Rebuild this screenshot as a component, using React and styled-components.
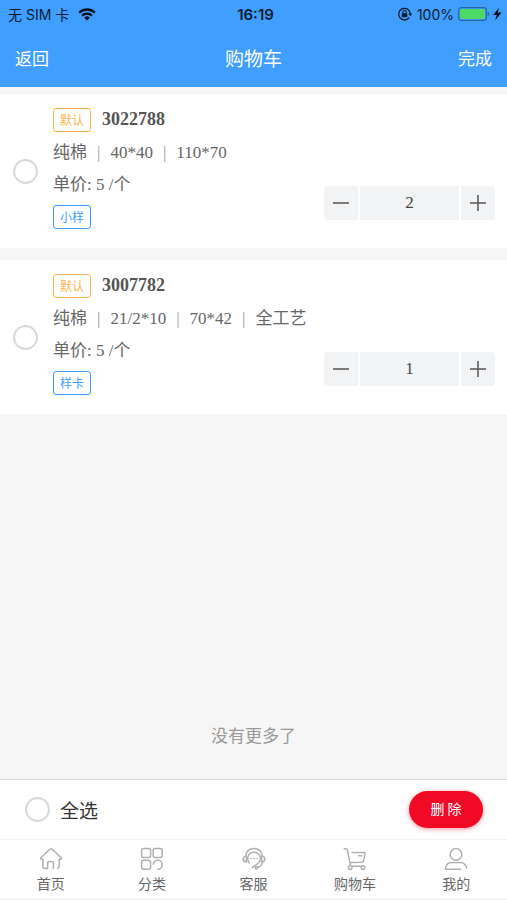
import React, { useState } from "react"
import styled, { createGlobalStyle, ThemeProvider } from "styled-components"

const theme = {
  colors: {
    primary: "#409eff",
    warning: "#fdb44f",
    danger: "#f00a26",
    page: "#f6f6f6",
    text: "#666",
    muted: "#999",
  },
  fonts: {
    serif: `"Liberation Serif", "Noto Sans CJK SC", serif`,
    sans: `"Noto Sans CJK SC", sans-serif`,
    system: `Inter, "Noto Sans CJK SC", sans-serif`,
  },
}

//Styles
const GlobalStyle = createGlobalStyle`
  * {
    box-sizing: border-box;
  }
  body {
    margin: 0;
    background: ${props => props.theme.colors.page};
    font-family: ${props => props.theme.fonts.sans};
  }
  button,
  input {
    margin: 0;
    padding: 0;
    border: 0;
    font-family: inherit;
  }
`
const Page = styled.div`
  display: flex;
  flex-direction: column;
  min-height: 100vh;
`
const Header = styled.header`
  background: ${props => props.theme.colors.primary};
`
const StatusBar = styled.div`
  display: grid;
  grid-template-columns: 1fr auto 1fr;
  align-items: center;
  height: 28px;
  padding: 0 4px 0 8px;
  color: #0b1c30;
  font-family: ${props => props.theme.fonts.system};
  font-size: 14px;
`
const StatusGroup = styled.div`
  display: flex;
  align-items: center;
  justify-content: ${props => (props.$end ? "flex-end" : "flex-start")};
  gap: ${props => (props.$end ? "4px" : "9px")};
`
const Clock = styled.time`
  font-size: 15px;
  font-weight: 600;
`
const NavBar = styled.div`
  display: grid;
  grid-template-columns: 1fr auto 1fr;
  align-items: center;
  height: 59px;
  padding: 0 15px;
`
const NavButton = styled.button`
  justify-self: ${props => (props.$end ? "end" : "start")};
  background: none;
  color: #fff;
  font-size: 17px;
`
const NavTitle = styled.h1`
  margin: 0;
  color: #fff;
  font-size: 19px;
  font-weight: 400;
`
const List = styled.main`
  display: flex;
  flex: 1;
  flex-direction: column;
  gap: 12px;
  padding-top: 7px;
  background: ${props => props.theme.colors.page};
`
const Card = styled.article`
  display: flex;
  align-items: center;
  height: 154px;
  padding: 0 12px 0 13px;
  background: #fff;
`
const Radio = styled.input`
  flex: none;
  appearance: none;
  width: 25px;
  height: 25px;
  border: 2px solid #d9d9d9;
  border-radius: 50%;
  background: #fff;
  &:checked {
    border-color: ${props => props.theme.colors.primary};
    background: ${props => props.theme.colors.primary};
  }
`
const Details = styled.div`
  flex: 1;
  align-self: flex-start;
  margin-left: 15px;
  padding-top: 14px;
  color: ${props => props.theme.colors.text};
  font-family: ${props => props.theme.fonts.serif};
  font-size: 17px;
`
const TitleRow = styled.div`
  display: flex;
  gap: 11px;
  margin-bottom: 5px;
`
const Code = styled.h2`
  margin: 0;
  color: #555;
  font-size: 18px;
  line-height: 22px;
`
const Badge = styled.span`
  display: inline-block;
  padding: 0 6px;
  border: 1px solid ${props => props.theme.colors[props.$tone]};
  border-radius: 3px;
  color: ${props => props.theme.colors[props.$tone]};
  font-family: ${props => props.theme.fonts.sans};
  font-size: 12px;
  line-height: 22px;
`
const Line = styled.div`
  line-height: 32px;
`
const Spec = styled.span`
  & + &::before {
    content: "|";
    margin: 0 10px;
    color: ${props => props.theme.colors.muted};
  }
`
const TagRow = styled.div`
  display: flex;
  margin-top: 4px;
`
const Stepper = styled.div`
  display: flex;
  flex: none;
  align-self: flex-end;
  gap: 2px;
  margin-bottom: 28px;
`
const StepButton = styled.button`
  display: flex;
  align-items: center;
  justify-content: center;
  width: 34px;
  height: 34px;
  border-radius: ${props => (props.$end ? "0 4px 4px 0" : "4px 0 0 4px")};
  background: #f2f3f5;
  color: #555;
`
const Quantity = styled.input`
  width: 99px;
  height: 34px;
  background: #f2f3f5;
  color: #444;
  font-family: ${props => props.theme.fonts.serif};
  font-size: 17px;
  text-align: center;
`
const EndText = styled.p`
  margin: auto 0 29px;
  color: ${props => props.theme.colors.muted};
  font-size: 17px;
  line-height: 30px;
  text-align: center;
`
const ActionBar = styled.div`
  display: flex;
  align-items: center;
  justify-content: space-between;
  height: 60px;
  padding: 0 24px 0 25px;
  border-top: 1px solid #dcdcdc;
  background: #fff;
`
const SelectAll = styled.label`
  display: flex;
  align-items: center;
  gap: 10px;
  color: #333;
  font-size: 19px;
  line-height: 26px;
`
const DeleteButton = styled.button`
  width: 74px;
  height: 37px;
  padding-bottom: 3px;
  border-radius: 19px;
  background: ${props => props.theme.colors.danger};
  box-shadow: 0 1px 5px rgba(240, 10, 38, 0.45);
  color: #fff;
  font-size: 14px;
`
const TabBar = styled.nav`
  display: flex;
  height: 61px;
  border-top: 1px solid #f3f3f3;
  border-bottom: 1px solid #ececec;
  background: #fff;
`
const Tab = styled.a`
  display: flex;
  flex: 1;
  flex-direction: column;
  align-items: center;
  padding-top: 7px;
  color: ${props => props.theme.colors.text};
  font-size: 14px;
  line-height: 22px;
  text-decoration: none;
`
const TabIcon = styled.svg`
  width: 24px;
  height: 24px;
  margin-bottom: 1px;
  fill: none;
  stroke: #b0b0b0;
  stroke-width: 1.5;
  stroke-linecap: round;
  stroke-linejoin: round;
`

const WifiIcon = () => (
  <svg width="18" height="13" viewBox="0 0 18 13" fill="none" stroke="#06101c">
    <path d="M1.2 4.6a11.4 11.4 0 0 1 15.6 0" strokeWidth="2.3" />
    <path d="M4 7.7a7.2 7.2 0 0 1 10 0" strokeWidth="2.2" />
    <path d="M9 12.6 6.2 9.7a4 4 0 0 1 5.6 0Z" fill="#06101c" stroke="none" />
  </svg>
)

const LockIcon = () => (
  <svg width="16" height="14" viewBox="0 0 16 14" fill="none" stroke="#0b1c30">
    <path d="M12.2 10.6A5.8 5.8 0 1 1 13.3 7" strokeWidth="1.3" />
    <path d="M11.2 6.4h4.2l-2.1 2.8z" fill="#0b1c30" stroke="none" />
    <path d="M5.8 6.6V5.2a1.7 1.7 0 0 1 3.4 0v1.4" strokeWidth="1.1" />
    <rect x="4.7" y="6.2" width="5.6" height="4" rx=".6" fill="#0b1c30" stroke="none" />
  </svg>
)

const BatteryIcon = () => (
  <svg width="45" height="14" viewBox="0 0 45 14">
    <rect x=".7" y=".7" width="27.6" height="12.6" rx="2.5" fill="none" stroke="#2564a8" strokeWidth="1.2" />
    <rect x="2" y="2" width="25" height="10" rx="1" fill="#4cd964" />
    <path d="M29.6 5v4q1.6-.5 1.6-2t-1.6-2z" fill="#2564a8" />
    <path d="M41 .8 35.2 7.9h3.6L37 13.4l6.6-7.8h-3.9z" fill="#06101c" />
  </svg>
)

const tabs = [
  {
    label: "首页",
    icon: (
      <path d="M18.6 21.4c1.1-.4 1.6-1.3 1.6-2.6v-6.6h1.4c.9 0 1.2-.8.6-1.4L13.2 2.3a1.7 1.7 0 0 0-2.4 0L1.8 10.8c-.6.6-.3 1.4.6 1.4H4v7.4a2 2 0 0 0 2 2h2.6V16c0-.9.5-1.4 1.4-1.4h3c.9 0 1.4.5 1.4 1.4v5.6" />
    ),
  },
  {
    label: "分类",
    icon: (
      <>
        <rect x="1.6" y="1.6" width="9" height="9" rx="2" />
        <rect x="13.2" y="1.6" width="9" height="9" rx="2" />
        <rect x="1.6" y="13.2" width="9" height="9" rx="2" />
        <path d="M13.3 17.2a4.5 4.5 0 1 1 4.6 5" />
      </>
    ),
  },
  {
    label: "客服",
    icon: (
      <>
        <path d="M3.6 9.2C4.3 4.6 7.6 1.6 12 1.6s7.7 3 8.4 7.6" />
        <path d="M4.4 9.2c-2 0-3.2 1.2-3.2 2.8s1.2 2.9 3.2 2.9zM19.6 9.2c2 0 3.2 1.2 3.2 2.8s-1.2 2.9-3.2 2.9z" />
        <path d="M7.4 16C3.8 11.6 6.4 5.2 12 5.2s8.2 6 5 10.2c-1.6 2-4.6 2.8-6.6 5.2M20.4 15c-.4 2.9-1.8 4.8-4.6 5.4" />
        <circle cx="14.4" cy="20.8" r="1.2" />
        <path d="M8.8 11.6h.2M12 11.6h.2M15.2 11.6h.2" />
      </>
    ),
  },
  {
    label: "购物车",
    icon: (
      <>
        <path d="M1.2 1.8h1.6c.9 0 1.4.4 1.6 1.3l3 15.1M9 5.4h11.8c.9 0 1.4.5 1.2 1.4l-1.4 7c-.2.9-.8 1.4-1.7 1.5L7.2 15.4M15.6 8.8h3.2" />
        <path d="M8.8 19.2H18.6" />
        <circle cx="7.2" cy="20.6" r="1.8" />
        <circle cx="20" cy="20.6" r="1.8" />
      </>
    ),
  },
  {
    label: "我的",
    icon: (
      <>
        <circle cx="12" cy="7.4" r="5.8" />
        <path d="M16.6 22.2H2.4c-.8 0-1.2-.5-1-1.3.7-3.2 3.3-5.5 6.6-5.5h8c3.4 0 6.3 2.4 6.6 5.8" />
      </>
    ),
  },
]

const items = [
  { code: "3022788", specs: ["纯棉", "40*40", "110*70"], tag: "小样", count: 2 },
  { code: "3007782", specs: ["纯棉", "21/2*10", "70*42", "全工艺"], tag: "样卡", count: 1 },
]

const CartItem = ({ item, checked, onCheck }) => {
  const [count, setCount] = useState(item.count)
  return (
    <Card>
      <Radio
        type="checkbox"
        aria-label={item.code}
        checked={checked}
        onChange={onCheck}
      />
      <Details>
        <TitleRow>
          <Badge $tone="warning">默认</Badge>
          <Code>{item.code}</Code>
        </TitleRow>
        <Line>
          {item.specs.map(spec => (
            <Spec key={spec}>{spec}</Spec>
          ))}
        </Line>
        <Line>单价: 5 /个</Line>
        <TagRow>
          <Badge $tone="primary">{item.tag}</Badge>
        </TagRow>
      </Details>
      <Stepper>
        <StepButton
          aria-label="减少"
          onClick={() => setCount(Math.max(1, Number(count) - 1))}
        >
          <svg width="18" height="18" stroke="currentColor" strokeWidth="1.5">
            <path d="M1 9h16" />
          </svg>
        </StepButton>
        <Quantity
          aria-label="数量"
          inputMode="numeric"
          value={count}
          onChange={e => setCount(e.target.value)}
        />
        <StepButton
          $end
          aria-label="增加"
          onClick={() => setCount(Number(count) + 1)}
        >
          <svg width="18" height="18" stroke="currentColor" strokeWidth="1.5">
            <path d="M1 9h16M9 1v16" />
          </svg>
        </StepButton>
      </Stepper>
    </Card>
  )
}

const App = () => {
  const [selected, setSelected] = useState([])
  const toggle = code =>
    setSelected(
      selected.includes(code)
        ? selected.filter(c => c !== code)
        : [...selected, code]
    )
  const all = selected.length === items.length

  return (
    <ThemeProvider theme={theme}>
      <GlobalStyle />
      <Page>
        <Header>
          <StatusBar>
            <StatusGroup>
              <span>无 SIM 卡</span>
              <WifiIcon />
            </StatusGroup>
            <Clock>16:19</Clock>
            <StatusGroup $end>
              <LockIcon />
              <span>100%</span>
              <BatteryIcon />
            </StatusGroup>
          </StatusBar>
          <NavBar>
            <NavButton>返回</NavButton>
            <NavTitle>购物车</NavTitle>
            <NavButton $end>完成</NavButton>
          </NavBar>
        </Header>
        <List>
          {items.map(item => (
            <CartItem
              key={item.code}
              item={item}
              checked={selected.includes(item.code)}
              onCheck={() => toggle(item.code)}
            />
          ))}
          <EndText>没有更多了</EndText>
        </List>
        <ActionBar>
          <SelectAll>
            <Radio
              type="checkbox"
              checked={all}
              onChange={() => setSelected(all ? [] : items.map(i => i.code))}
            />
            全选
          </SelectAll>
          <DeleteButton>删 除</DeleteButton>
        </ActionBar>
        <TabBar>
          {tabs.map(tab => (
            <Tab key={tab.label} href="#">
              <TabIcon viewBox="0 0 24 24">{tab.icon}</TabIcon>
              {tab.label}
            </Tab>
          ))}
        </TabBar>
      </Page>
    </ThemeProvider>
  )
}

export default App
